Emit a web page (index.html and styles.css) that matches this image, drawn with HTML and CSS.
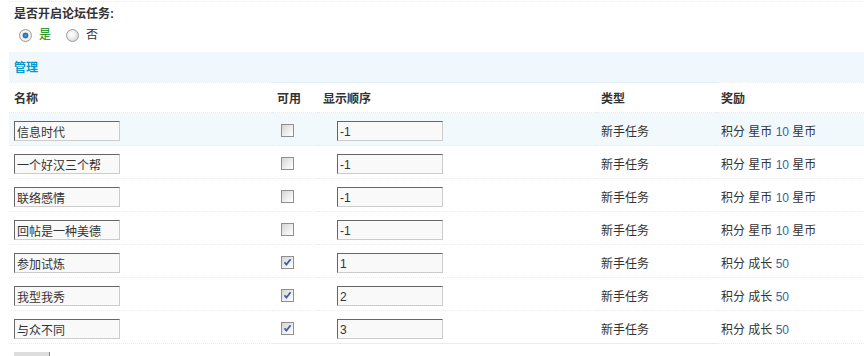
FILE: index.html
```html
<!DOCTYPE html>
<html lang="zh-CN">
<head>
<meta charset="utf-8">
<title>论坛任务</title>
<link rel="stylesheet" href="styles.css">
</head>
<body>
<div class="page">
<div class="intro">
  <div class="intro-title">是否开启论坛任务:</div>
  <div class="radios">
    <label class="opt"><input type="radio" name="open" class="rd" checked><span class="yes">是</span></label>
    <label class="opt"><input type="radio" name="open" class="rd"><span>否</span></label>
  </div>
</div>
<table class="tb">
  <colgroup>
    <col class="c1"><col class="c2"><col class="c3"><col class="c4"><col class="c5">
  </colgroup>
  <tr class="partition"><th colspan="5">管理</th></tr>
  <tr class="head">
    <td>名称</td><td class="mid">可用</td><td class="mid">显示顺序</td><td class="mid">类型</td><td>奖励</td>
  </tr>
  <tr class="row hover">
    <td class="inp"><input class="txt" value="信息时代"></td>
    <td class="chk"><input type="checkbox" class="cb"></td>
    <td class="inp"><input class="txt ord" value="-1"></td>
    <td class="tx">新手任务</td>
    <td class="tx">积分 星币 <span class="num">10</span> 星币</td>
  </tr>
  <tr class="row">
    <td class="inp"><input class="txt" value="一个好汉三个帮"></td>
    <td class="chk"><input type="checkbox" class="cb"></td>
    <td class="inp"><input class="txt ord" value="-1"></td>
    <td class="tx">新手任务</td>
    <td class="tx">积分 星币 <span class="num">10</span> 星币</td>
  </tr>
  <tr class="row">
    <td class="inp"><input class="txt" value="联络感情"></td>
    <td class="chk"><input type="checkbox" class="cb"></td>
    <td class="inp"><input class="txt ord" value="-1"></td>
    <td class="tx">新手任务</td>
    <td class="tx">积分 星币 <span class="num">10</span> 星币</td>
  </tr>
  <tr class="row">
    <td class="inp"><input class="txt" value="回帖是一种美德"></td>
    <td class="chk"><input type="checkbox" class="cb"></td>
    <td class="inp"><input class="txt ord" value="-1"></td>
    <td class="tx">新手任务</td>
    <td class="tx">积分 星币 <span class="num">10</span> 星币</td>
  </tr>
  <tr class="row">
    <td class="inp"><input class="txt" value="参加试炼"></td>
    <td class="chk"><input type="checkbox" class="cb" checked></td>
    <td class="inp"><input class="txt ord" value="1"></td>
    <td class="tx">新手任务</td>
    <td class="tx">积分 成长 <span class="num">50</span></td>
  </tr>
  <tr class="row">
    <td class="inp"><input class="txt" value="我型我秀"></td>
    <td class="chk"><input type="checkbox" class="cb" checked></td>
    <td class="inp"><input class="txt ord" value="2"></td>
    <td class="tx">新手任务</td>
    <td class="tx">积分 成长 <span class="num">50</span></td>
  </tr>
  <tr class="row last">
    <td class="inp"><input class="txt" value="与众不同"></td>
    <td class="chk mid"><input type="checkbox" class="cb" checked></td>
    <td class="inp mid"><input class="txt ord" value="3"></td>
    <td class="tx mid">新手任务</td>
    <td class="tx">积分 成长 <span class="num">50</span></td>
  </tr>
</table>
<div class="actions"><button class="btn" type="button" aria-label="提交"></button></div>
</div>
</body>
</html>
```
FILE: styles.css
```css
html, body {
  margin: 0;
  padding: 0;
  overflow: hidden;
  background: #fff;
}
body {
  font-family: "Liberation Sans", "Noto Sans CJK SC", sans-serif;
  font-size: 12px;
  color: #333;
}
.page {
  padding: 1px 0 0 9px;
}
.intro {
  width: 855px;
  border-top: 1px dotted #DEEFFB;
  padding: 5px 5px 9px;
  box-sizing: border-box;
}
.intro-title {
  line-height: 15px;
  height: 16px;
  font-weight: bold;
  color: #333;
}
.radios {
  display: flex;
  align-items: center;
  height: 16px;
  margin-top: 4px;
  line-height: 16px;
}
.opt {
  display: flex;
  align-items: center;
  margin-right: 10px;
}
.rd {
  appearance: none;
  -webkit-appearance: none;
  width: 13px;
  height: 13px;
  margin: 0 7px 0 5px;
  border-radius: 50%;
  border: 1px solid #9a9a9a;
  background: radial-gradient(circle at 40% 40%, #fff 0, #f0f0f0 40%, #c8c8c8 100%);
  box-sizing: border-box;
}
.rd:checked {
  background: radial-gradient(circle at 50% 50%, #4aa3e8 0, #1865b0 2.6px, #e8e8e8 3.2px, #f6f6f6 4.5px, #c8c8c8 100%);
}
.yes { color: #008800; }
.tb {
  width: 855px;
  border-collapse: separate;
  border-spacing: 0;
  table-layout: fixed;
}
.c1 { width: 263px; }
.c2 { width: 46px; }
.c3 { width: 278px; }
.c4 { width: 120px; }
.c5 { width: 148px; }
.tb td, .tb th {
  padding: 0 5px;
  text-align: left;
  vertical-align: top;
  line-height: 16px;
}
.partition th {
  padding: 8px 5px 6px;
  background: #F0F7FD;
  color: #0099CC;
  font-weight: bold;
}
.head td {
  padding: 8px 5px 5px;
  font-weight: bold;
  border-top: 1px dotted #DEEFFB;
  border-bottom: 1px dotted #DEEFFB;
}
.head td.mid {
  border-top: 1px solid #DEEFFB;
}
.row td {
  border-bottom: 1px dotted #DEEFFB;
}
.row td.inp {
  padding: 8px 5px 4px;
}
.row td.chk {
  padding: 11px 5px 0;
}
.row td.tx {
  padding: 11px 5px 0;
}
.row.last td.mid {
  border-bottom: 1px solid #DEEFFB;
}
.row.hover td {
  background: #F2F9FD;
}
.txt {
  display: block;
  width: 106px;
  height: 20px;
  box-sizing: border-box;
  margin: 0;
  padding: 1px 2px 0;
  border: 1px solid;
  border-color: #666 #ccc #ccc #666;
  background: #F9F9F9;
  font-family: "Liberation Sans", "Noto Sans CJK SC", sans-serif;
  font-size: 12px;
  color: #333;
  outline: none;
}
.ord {
  margin-left: 14px;
}
.cb {
  appearance: none;
  -webkit-appearance: none;
  display: block;
  width: 13px;
  height: 13px;
  margin: 0 0 0 4px;
  box-sizing: border-box;
  border: 1px solid #8f8f8f;
  background: linear-gradient(135deg, #d4d4d4 0%, #ececec 50%, #ffffff 100%);
}
.cb:checked {
  background-image: url("data:image/svg+xml;utf8,<svg xmlns='http://www.w3.org/2000/svg' width='11' height='11' viewBox='0 0 11 11'><path d='M2.5 5.2 L4.4 7.6 L8.6 2.2' fill='none' stroke='%233e5fa8' stroke-width='1.8'/></svg>"), linear-gradient(135deg, #d4d4d4 0%, #ececec 50%, #ffffff 100%);
  background-repeat: no-repeat;
}
.num {
  color: #336699;
}
.actions {
  padding: 8px 0 0 5px;
}
.btn {
  display: block;
  width: 36px;
  height: 20px;
  margin: 0;
  padding: 0;
  border: 0;
  border-right: 1px solid #888;
  background: #ddd;
}
```
